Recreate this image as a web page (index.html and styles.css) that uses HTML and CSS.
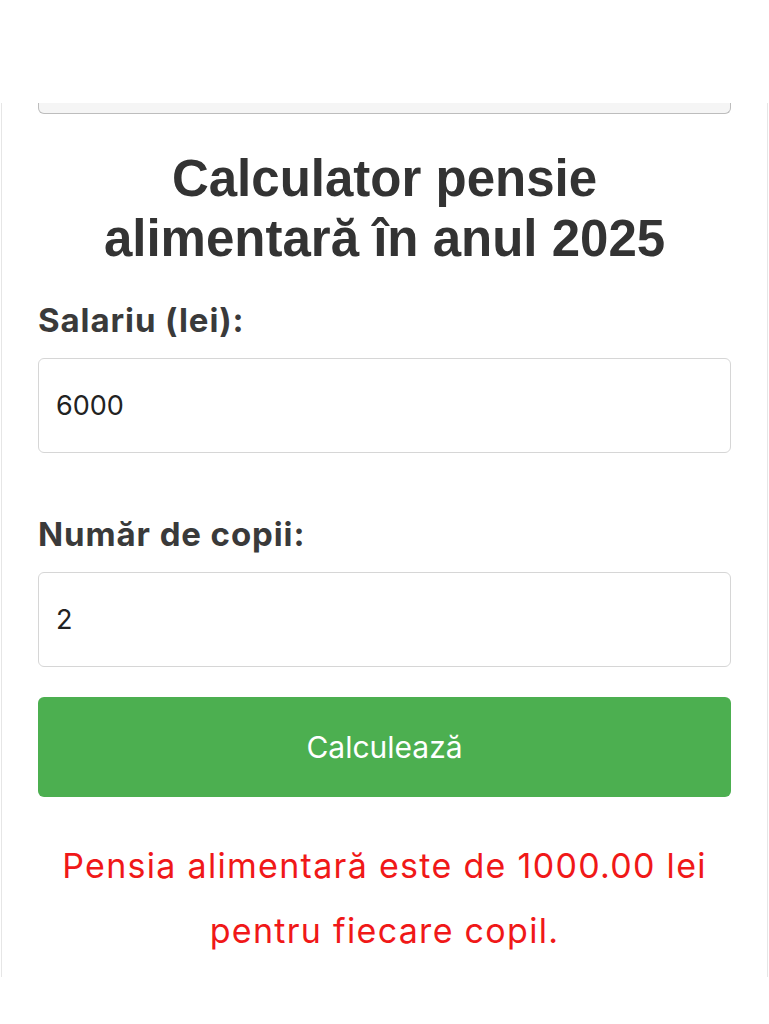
FILE: index.html
```html
<!DOCTYPE html>
<html lang="ro">
<head>
  <meta charset="UTF-8" />
  <meta name="viewport" content="width=device-width, initial-scale=1.0"/>
  <title>Calculator pensie alimentară</title>
  <link rel="stylesheet" href="styles.css">
</head>
<body>
  <div class="container">
    <div class="top-bar"></div>

    <h2>Calculator pensie alimentară în anul 2025</h2>

    <div class="field">
      <label for="salary">Salariu (lei):</label>
      <input type="number" id="salary" value="6000" />
    </div>

    <div class="field">
      <label for="children">Număr de copii:</label>
      <input type="number" id="children" value="2" />
    </div>

    <button onclick="calculate()">Calculează</button>

    <div id="result">Pensia alimentară este de 1000.00 lei pentru fiecare copil.</div>
  </div>

  <script>
    function calculate() {
      const salary = parseFloat(document.getElementById("salary").value);
      const children = parseInt(document.getElementById("children").value);
      if (isNaN(salary) || isNaN(children) || children < 1) return;
      const rates = { 1: 0.25, 2: 0.33, 3: 0.5 };
      const rate = rates[Math.min(children, 3)];
      const perChild = (salary * rate) / children;
      document.getElementById("result").textContent =
        `Pensia alimentară este de ${perChild.toFixed(2)} lei pentru fiecare copil.`;
    }
  </script>
</body>
</html>
```

FILE: styles.css
```css
:root {
  --text: #333;
  --green: #4caf50;
  --red: #f01818;
  --border: #d6d6d6;
  --radius: 6px;
}

* {
  box-sizing: border-box;
}

body {
  margin: 0;
  background: #fff;
  color: var(--text);
  font-family: Inter, 'Liberation Sans', sans-serif;
}

.container {
  margin: 103px 1px 0;
  padding: 0 36px 14px;
  border-left: 1px solid #e6e6e6;
  border-right: 1px solid #e6e6e6;
}

.top-bar {
  height: 11px;
  background: #f5f5f5;
  border: 1px solid #bdbdbd;
  border-top: none;
  border-radius: 0 0 var(--radius) var(--radius);
}

h2 {
  margin: 35px 0 0;
  padding: 0 40px;
  text-align: center;
  font-family: 'Liberation Sans', Arial, sans-serif;
  font-size: 51px;
  line-height: 60px;
  font-weight: bold;
  color: #333;
}

.field {
  margin-top: 31px;
}

.field + .field {
  margin-top: 61px;
}

label {
  display: block;
  font-size: 33px;
  font-weight: bold;
  letter-spacing: 0.9px;
  color: #3a3a3a;
}

input {
  display: block;
  width: 100%;
  height: 95px;
  margin-top: 18px;
  padding: 0 17px;
  font-family: inherit;
  font-size: 27px;
  color: #222;
  border: 1px solid var(--border);
  border-radius: var(--radius);
  outline: none;
  -moz-appearance: textfield;
}

input::-webkit-outer-spin-button,
input::-webkit-inner-spin-button {
  -webkit-appearance: none;
}

button {
  display: block;
  width: 100%;
  height: 100px;
  margin-top: 30px;
  background: var(--green);
  color: #fff;
  border: none;
  border-radius: var(--radius);
  font-family: inherit;
  font-size: 30px;
  cursor: pointer;
}

#result {
  margin-top: 36px;
  text-align: center;
  color: var(--red);
  font-size: 34px;
  letter-spacing: 1.3px;
  line-height: 65px;
}
```
